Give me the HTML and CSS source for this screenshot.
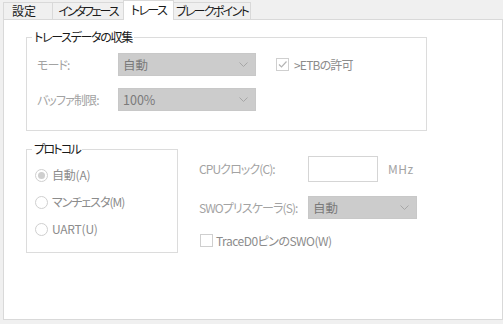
FILE: index.html
```html
<!DOCTYPE html>
<html lang="ja">
<head>
<meta charset="utf-8">
<link rel="stylesheet" href="styles.css">
</head>
<body>
<div class="window">
  <div class="tabs">
    <div class="tab t1">設定</div>
    <div class="tab t2">インタフェース</div>
    <div class="tab t3 active">トレース</div>
    <div class="tab t4">ブレークポイント</div>
  </div>
  <div class="panel">
    <fieldset class="group g1">
      <legend>トレースデータの収集</legend>
      <div class="g1-grid">
        <span class="lbl">モード:</span>
        <div class="select s1"><span>自動</span><svg class="chev" width="9" height="5" viewBox="0 0 9 5"><path d="M0.5 0.5 L4.5 4.5 L8.5 0.5" fill="none" stroke="#a6a6a6" stroke-width="1"/></svg></div>
        <div class="check etb"><span class="box"><svg width="11" height="11" viewBox="0 0 11 11"><path d="M2 5.5 L4.5 8 L9.5 2.5" fill="none" stroke="#b4b4b4" stroke-width="1.2"/></svg></span><span>&gt;ETBの許可</span></div>
        <span class="lbl">バッファ制限:</span>
        <div class="select s1"><span>100%</span><svg class="chev" width="9" height="5" viewBox="0 0 9 5"><path d="M0.5 0.5 L4.5 4.5 L8.5 0.5" fill="none" stroke="#a6a6a6" stroke-width="1"/></svg></div>
      </div>
    </fieldset>
    <div class="lower">
      <fieldset class="group g2">
        <legend>プロトコル</legend>
        <div class="radios">
          <div class="radio on"><span class="circle"></span><span>自動(A)</span></div>
          <div class="radio"><span class="circle"></span><span class="kana">マンチェスタ(M)</span></div>
          <div class="radio"><span class="circle"></span><span>UART(U)</span></div>
        </div>
      </fieldset>
      <div class="right">
        <span class="lbl">CPUクロック(C):</span>
        <div class="input"></div>
        <span class="lbl unit">MHz</span>
        <span class="lbl">SWOプリスケーラ(S):</span>
        <div class="select s2"><span>自動</span><svg class="chev" width="9" height="5" viewBox="0 0 9 5"><path d="M0.5 0.5 L4.5 4.5 L8.5 0.5" fill="none" stroke="#a6a6a6" stroke-width="1"/></svg></div>
        <div class="check swo"><span class="box"></span><span>TraceD0ピンのSWO(W)</span></div>
      </div>
    </div>
  </div>
</div>
</body>
</html>
```

FILE: styles.css
```css
* { box-sizing: border-box; }
html, body {
  margin: 0;
  padding: 0;
  background: #f0f0f0;
}
body {
  width: 503px;
  height: 324px;
  overflow: hidden;
  font-family: "Noto Sans CJK JP", "Noto Sans", sans-serif;
  font-size: 12px;
  line-height: 16px;
  font-feature-settings: "palt";
  color: #000;
}
.window {
  padding-left: 3px;
}
.tabs {
  display: flex;
  align-items: flex-end;
  height: 19px;
}
.tab {
  height: 17px;
  border: 1px solid #d9d9d9;
  border-bottom: none;
  margin-right: -1px;
  background: #f0f0f0;
  display: flex;
  align-items: center;
  justify-content: center;
  white-space: nowrap;
  color: #1a1a1a;
}
.t1 { width: 50px; letter-spacing: 0; justify-content: flex-start; padding-left: 8px; }
.t2 { width: 72px; letter-spacing: -2.1px; }
.t3 { width: 51px; letter-spacing: -1.6px; }
.t4 { width: 78px; letter-spacing: -1.7px; }
.tab.active {
  height: 20px;
  margin-bottom: -1px;
  background: #fff;
  position: relative;
  z-index: 1;
  padding-bottom: 2px;
}
.panel {
  width: 500px;
  height: 301px;
  border: 1px solid #d9d9d9;
  background: #fff;
  padding: 9px 0 0 22px;
}
.group {
  margin: 0;
  border: 1px solid #dcdcdc;
  padding: 0;
  min-width: 0;
}
.group legend {
  margin-left: 5px;
  padding: 0 2px;
  line-height: 16px;
  color: #1a1a1a;
}
.g1 legend { letter-spacing: -1.3px; }
.g2 legend { letter-spacing: -1.7px; }
.g1 {
  width: 401px;
  padding-bottom: 19px;
}
.g1-grid {
  display: grid;
  grid-template-columns: 81px 138px auto;
  row-gap: 12px;
  align-items: center;
  padding: 8px 0 0 10px;
}
.lbl {
  color: #a3a3a3;
  white-space: nowrap;
  letter-spacing: -0.9px;
}
.select {
  height: 23px;
  background: #cccccc;
  border: 1px solid #c8c8c8;
  display: flex;
  align-items: center;
  justify-content: space-between;
  padding: 0 7px 0 4px;
  color: #7a7a7a;
  font-size: 12.5px;
}
.check {
  display: flex;
  align-items: center;
  color: #8c8c8c;
  white-space: nowrap;
}
.box {
  width: 13px;
  height: 13px;
  border: 1px solid #cfcfcf;
  display: flex;
  align-items: center;
  justify-content: center;
  background: #fff;
  flex: none;
}
.etb { margin-left: 20px; gap: 5px; letter-spacing: -0.8px; }
.lower {
  display: flex;
  margin-top: 10px;
}
.g2 {
  width: 152px;
  padding-bottom: 15px;
}
.radios {
  display: flex;
  flex-direction: column;
  gap: 11px;
  padding: 10px 0 0 8px;
}
.radio {
  display: flex;
  align-items: center;
  gap: 4px;
  height: 16px;
  color: #8c8c8c;
  white-space: nowrap;
  letter-spacing: -0.2px;
}
.radio .kana { letter-spacing: -1px; }
.circle {
  width: 13px;
  height: 13px;
  border-radius: 50%;
  border: 1px solid #cfcfcf;
  display: flex;
  align-items: center;
  justify-content: center;
  flex: none;
}
.radio.on .circle::after {
  content: "";
  width: 7px;
  height: 7px;
  border-radius: 50%;
  background: #cfcfcf;
}
.right {
  margin-left: 21px;
  padding-top: 15px;
  display: grid;
  grid-template-columns: 109px 70px auto;
  grid-template-rows: 26px 23px 16px;
  row-gap: 14px;
  align-items: center;
  align-content: start;
}
.input {
  height: 26px;
  border: 1px solid #d5d5d5;
  background: #fff;
}
.unit { margin-left: 10px; letter-spacing: 0.5px; }
.s2 { grid-column: 2 / 4; width: 109px; }
.swo {
  grid-column: 1 / 4;
  gap: 3px;
  margin-top: -1px;
  padding-left: 1px;
  letter-spacing: -0.5px;
}
```
